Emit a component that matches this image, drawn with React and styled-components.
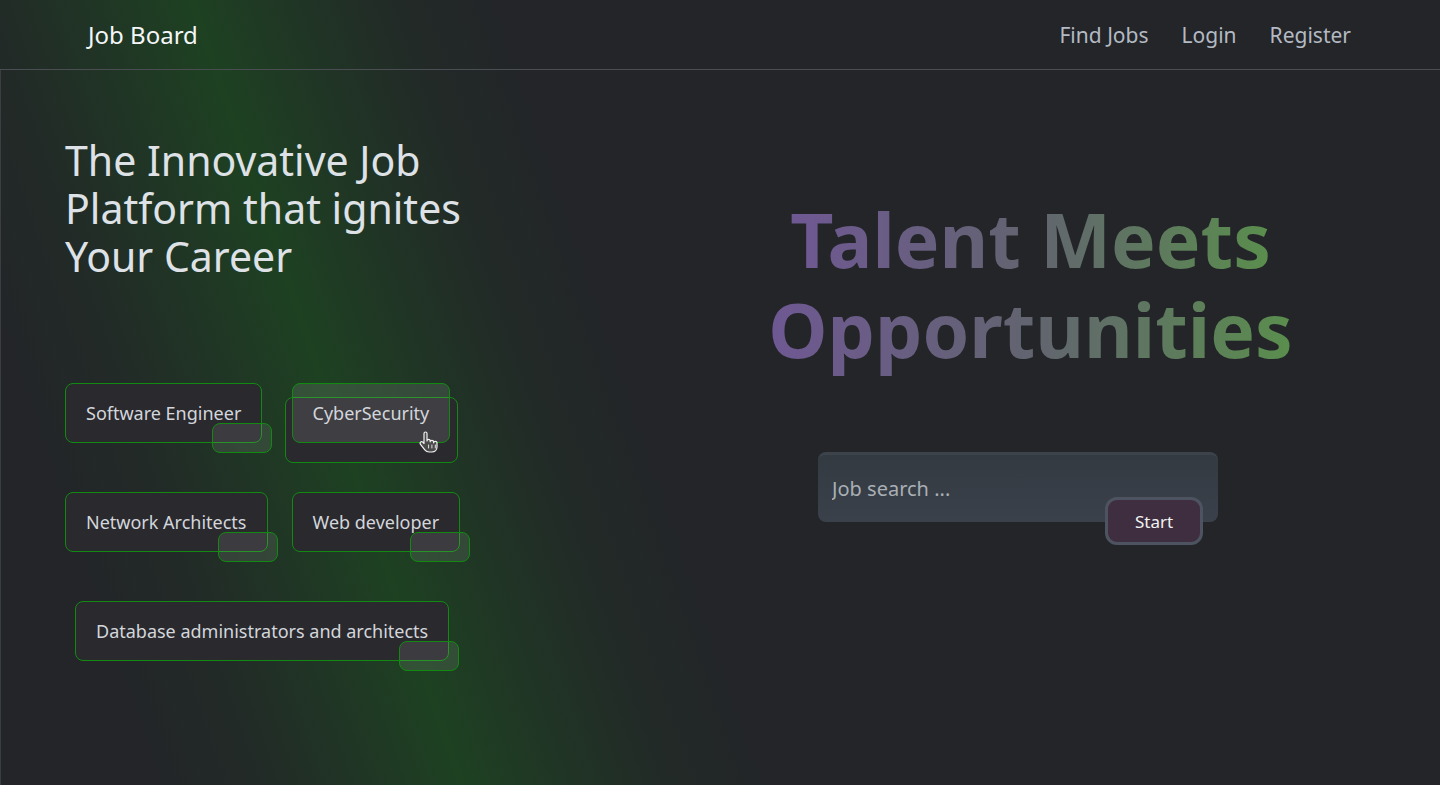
import styled, { createGlobalStyle, css } from 'styled-components';

const GlobalStyle = createGlobalStyle`
  html, body {
    margin: 0;
    padding: 0;
  }

  body {
    background: #232528;
    font-family: "Noto Sans", "Open Sans", sans-serif;
    color: #dee2e6;
  }
`;

const jobs = [
  { label: 'Software Engineer' },
  { label: 'CyberSecurity', hovered: true },
  { label: 'Network Architects' },
  { label: 'Web developer' },
  { label: 'Database administrators and architects', wide: true },
];

function HandCursor() {
  return (
    <Cursor width="20" height="23" viewBox="0 0 20 23">
      <path
        d="M6.5 1C5.7 1 5 1.7 5 2.5V12.5L3.8 11.2C3.2 10.6 2.2 10.6 1.6 11.2C1 11.8 1 12.7 1.5 13.3L5.8 18.8C6.9 20.2 8.3 21 10.3 21H13C15.8 21 18 18.8 18 16V11.8C18 11 17.3 10.3 16.3 10.3C15.3 10.3 14.6 11 14.6 11.8V10.8C14.6 10 13.9 9.3 12.9 9.3C12 9.3 11.2 10 11.2 10.8V9.9C11.2 9.1 10.5 8.4 9.6 8.4C8.7 8.4 8 9.1 8 9.9V2.5C8 1.7 7.3 1 6.5 1Z"
        fill="#4a4a4a"
        stroke="#f2f2f2"
        strokeWidth="1.2"
        strokeLinejoin="round"
      />
      <path d="M9.6 14V17M12.9 14V17M16.3 14V17" stroke="#f2f2f2" strokeWidth="0.9" strokeLinecap="round" />
    </Cursor>
  );
}

export default function App() {
  return (
    <>
      <GlobalStyle />
      <Page>
        <Header>
          <Brand>Job Board</Brand>
          <NavLinks>
            <NavLink>Find Jobs</NavLink>
            <NavLink>Login</NavLink>
            <NavLink>Register</NavLink>
          </NavLinks>
        </Header>

        <Main>
          <LeftCol>
            <Heading>The Innovative Job Platform that ignites Your Career</Heading>
            <ChipGrid>
              {jobs.map((job) => (
                <Chip key={job.label} $hovered={job.hovered} $wide={job.wide}>
                  {job.label}
                  {job.hovered && <HandCursor />}
                </Chip>
              ))}
            </ChipGrid>
          </LeftCol>

          <RightCol>
            <Title>
              <GradientText>
                Talent Meets
                <br />
                Opportunities
              </GradientText>
            </Title>
            <SearchWrap>
              <SearchInput type="text" placeholder="Job search ..." />
              <StartButton>Start</StartButton>
            </SearchWrap>
          </RightCol>
        </Main>
      </Page>
    </>
  );
}

const Page = styled.div`
  min-height: 100vh;
  background: linear-gradient(
    71deg,
    #232528 0%,
    #232528 9%,
    #222a27 15%,
    #203525 21%,
    #1e4122 27%,
    #203525 33%,
    #222a27 39%,
    #232528 45%,
    #232528 100%
  );
`;

const Header = styled.header`
  display: flex;
  align-items: center;
  justify-content: space-between;
  height: 69px;
  padding: 0 89px 0 88px;
  border-bottom: 1px solid #4a4e52;
`;

const Brand = styled.a`
  font-size: 24px;
  color: #f4f6f8;
  text-decoration: none;
`;

const NavLinks = styled.nav`
  display: flex;
  gap: 33px;
`;

const NavLink = styled.a`
  font-size: 21px;
  color: #b3bac3;
  cursor: pointer;
`;

const Main = styled.main`
  display: grid;
  grid-template-columns: 620px 1fr;
  min-height: calc(100vh - 70px);
  border-left: 1px solid #3b3e41;
`;

const LeftCol = styled.section`
  padding: 66px 0 0 64px;
`;

const Heading = styled.h1`
  margin: 0;
  max-width: 430px;
  font-size: 41px;
  line-height: 48px;
  font-weight: 400;
  color: #dee2e6;
`;

const ChipGrid = styled.div`
  display: grid;
  grid-template-columns: max-content max-content;
  justify-items: start;
  column-gap: 24px;
  row-gap: 49px;
  margin-top: 103px;
  isolation: isolate;
`;

const Chip = styled.div`
  position: relative;
  display: flex;
  align-items: center;
  height: 60px;
  box-sizing: border-box;
  padding: 0 20px;
  border: 1px solid #128a12;
  border-radius: 8px;
  background: #29292e;
  color: #d3d6db;
  font-size: 18px;
  cursor: pointer;

  ${(p) =>
    p.$wide &&
    css`
      grid-column: 1 / -1;
      margin-left: 10px;
    `}

  &::after {
    content: '';
    position: absolute;
    right: -11px;
    bottom: -11px;
    width: 60px;
    height: 30px;
    box-sizing: border-box;
    border: 1px solid #128a12;
    border-radius: 8px;
    background: rgba(255, 255, 255, 0.09);
  }

  ${(p) =>
    p.$hovered &&
    css`
      background: rgba(255, 255, 255, 0.1);

      &::after {
        top: 13px;
        left: -8px;
        right: -9px;
        bottom: -21px;
        width: auto;
        height: auto;
        background: #29292e;
        z-index: -1;
      }
    `}
`;

const Cursor = styled.svg`
  position: absolute;
  left: 126px;
  top: 47px;
  z-index: 2;
`;

const RightCol = styled.section`
  display: flex;
  flex-direction: column;
  align-items: center;
  padding-top: 124px;
`;

const Title = styled.h2`
  margin: 0;
  font-size: 75px;
  line-height: 90px;
  font-weight: 700;
  text-align: center;
`;

const GradientText = styled.span`
  background: linear-gradient(90deg, #6f5893 0%, #626470 50%, #5a8e4d 100%);
  -webkit-background-clip: text;
  background-clip: text;
  color: transparent;
  -webkit-box-decoration-break: clone;
  box-decoration-break: clone;
`;

const SearchWrap = styled.div`
  position: relative;
  width: 400px;
  height: 70px;
  margin-top: 78px;
  margin-right: 25px;
`;

const SearchInput = styled.input`
  width: 100%;
  height: 100%;
  box-sizing: border-box;
  padding: 0 14px;
  border: none;
  border-top: 3px solid #3c434b;
  border-radius: 8px;
  background: linear-gradient(180deg, #333a42 0%, #3a414a 100%);
  color: #dee2e6;
  font-family: inherit;
  font-size: 20px;
  outline: none;

  &::placeholder {
    color: #a9afb5;
  }
`;

const StartButton = styled.button`
  position: absolute;
  left: 287px;
  top: 45px;
  width: 98px;
  height: 48px;
  border: 3px solid #4e5361;
  border-radius: 12px;
  background: #3e2e3f;
  color: #f2f2f2;
  font-family: inherit;
  font-size: 17px;
  cursor: pointer;
`;
